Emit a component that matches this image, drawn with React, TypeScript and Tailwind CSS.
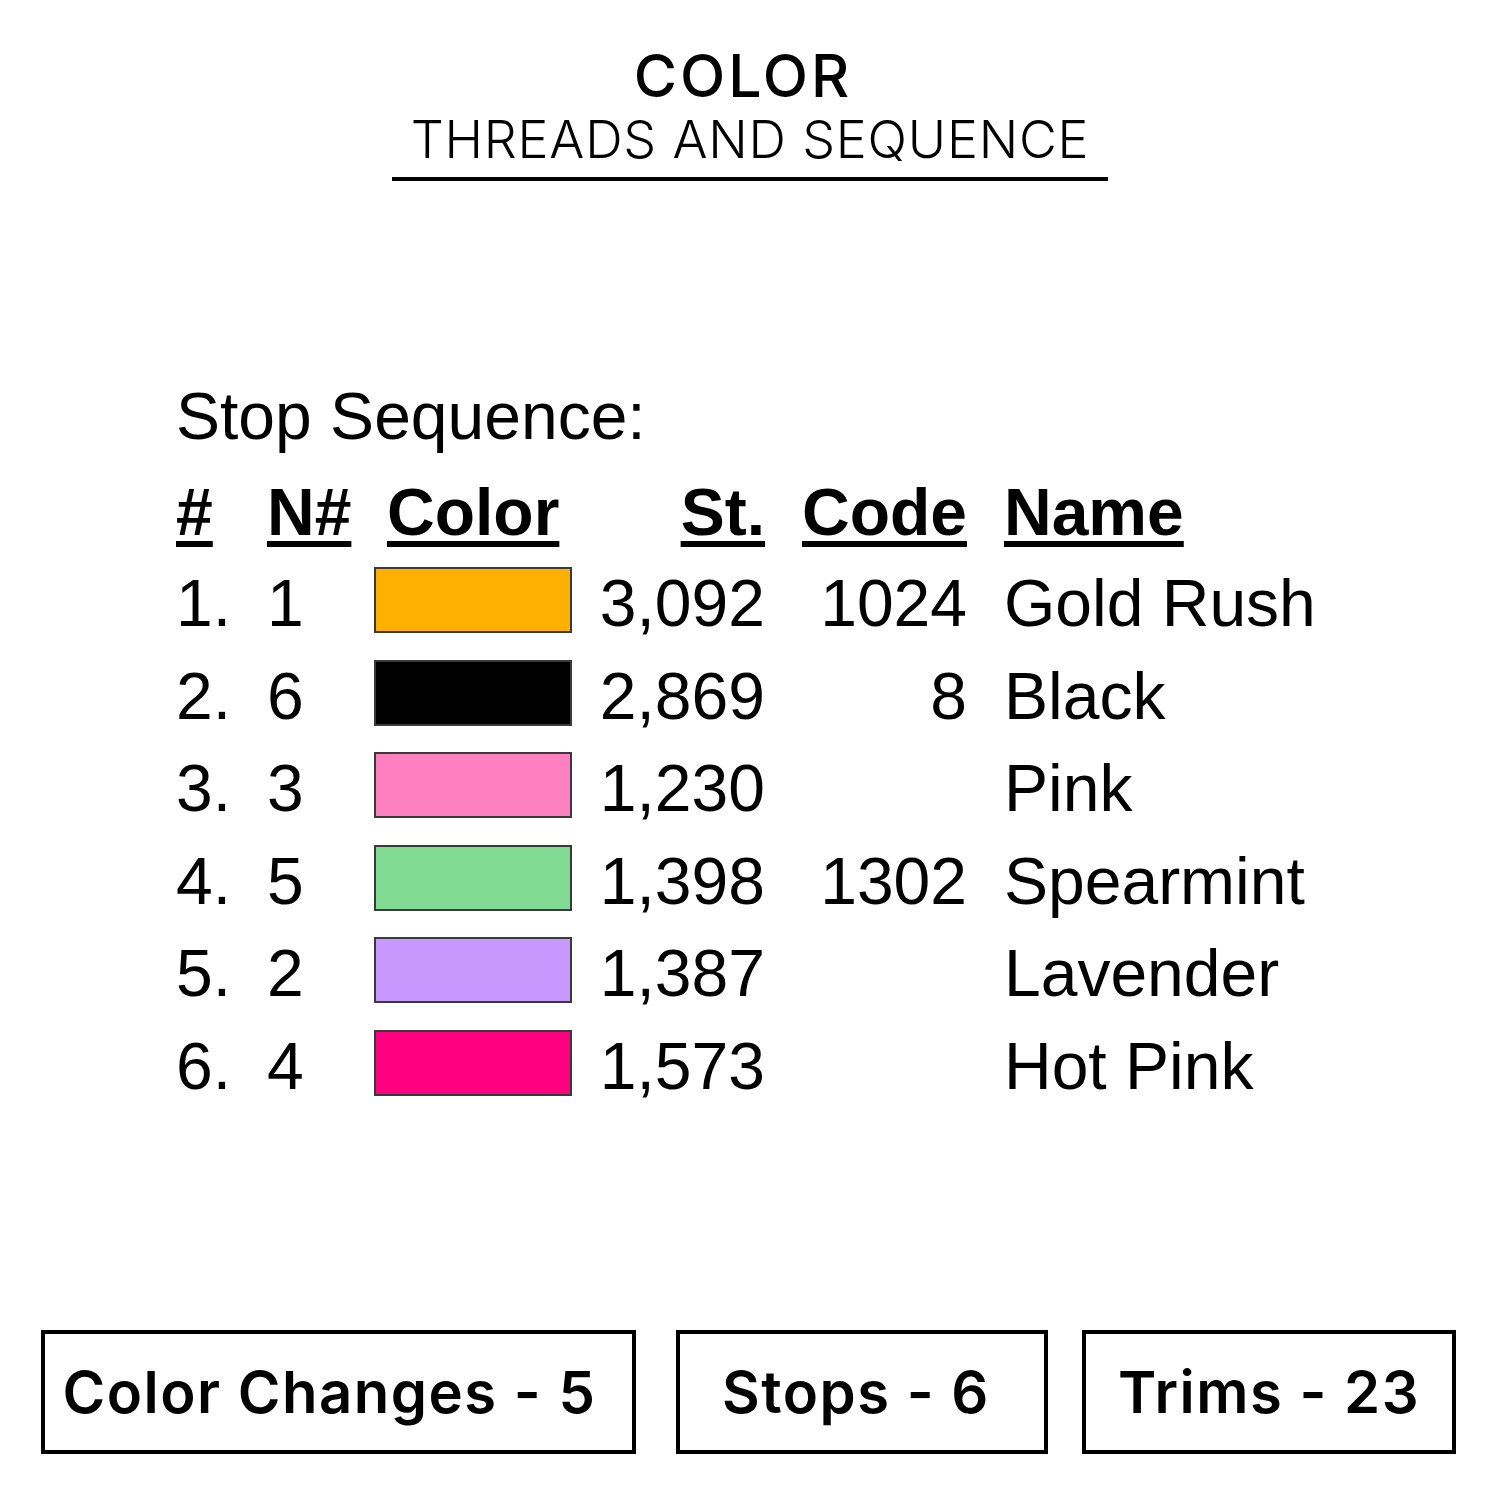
import React from "react";

type Row = {
  idx: string;
  needle: string;
  color: string;
  stitches: string;
  code: string;
  name: string;
};

const rows: Row[] = [
  { idx: "1.", needle: "1", color: "bg-[#ffb000]", stitches: "3,092", code: "1024", name: "Gold Rush" },
  { idx: "2.", needle: "6", color: "bg-[#000000]", stitches: "2,869", code: "8", name: "Black" },
  { idx: "3.", needle: "3", color: "bg-[#ff80c0]", stitches: "1,230", code: "", name: "Pink" },
  { idx: "4.", needle: "5", color: "bg-[#80da92]", stitches: "1,398", code: "1302", name: "Spearmint" },
  { idx: "5.", needle: "2", color: "bg-[#c898fe]", stitches: "1,387", code: "", name: "Lavender" },
  { idx: "6.", needle: "4", color: "bg-[#ff0080]", stitches: "1,573", code: "", name: "Hot Pink" },
];

const stats = [
  { label: "Color Changes - 5", cls: "w-[595px] pr-[18px]" },
  { label: "Stops - 6", cls: "w-[372px] pr-[12px]" },
  { label: "Trims - 23", cls: "w-[374px] -ml-[6px]" },
];

const headCls = "underline decoration-[6px] underline-offset-[6px]";

export default function App() {
  return (
    <div className="w-[1500px] h-[1500px] bg-white text-black flex flex-col">
      {/* titulo */}
      <div className="flex flex-col items-center pt-[41px] font-['Inter',sans-serif]">
        <h1 className="text-[59px] leading-[70px] font-medium tracking-[3px] pr-[14px]">COLOR</h1>
        <h2 className="text-[52px] leading-[60px] font-light tracking-[0.8px] -mt-[1px]">THREADS AND SEQUENCE</h2>
        <div className="w-[716px] h-[4px] bg-black mt-[7px]" />
      </div>

      {/* tabla de hilos */}
      <div className="pl-[176px] mt-[189px] font-['Liberation_Sans',Arial,sans-serif] text-[66px]">
        <div className="leading-[92px] mb-[6px]">Stop Sequence:</div>

        <div className="flex font-bold leading-[89px]">
          <div className="w-[91px]"><span className={headCls}>#</span></div>
          <div className="w-[107px]"><span className={headCls}>N#</span></div>
          <div className="w-[198px] pl-[13px]"><span className={headCls}>Color</span></div>
          <div className="w-[193px] text-right"><span className={headCls}>St.</span></div>
          <div className="w-[202px] text-right"><span className={headCls}>Code</span></div>
          <div className="pl-[37px]"><span className={headCls}>Name</span></div>
        </div>

        {rows.map((r) => (
          <div key={r.idx} className="flex h-[92.5px] leading-[92.5px]">
            <div className="w-[91px]">{r.idx}</div>
            <div className="w-[107px]">{r.needle}</div>
            <div className="w-[198px] pt-[10px]">
              <div className={`h-[66px] w-full border-2 border-[#3a3a3a] ${r.color}`} />
            </div>
            <div className="w-[193px] text-right">{r.stitches}</div>
            <div className="w-[202px] text-right">{r.code}</div>
            <div className="pl-[37px] whitespace-nowrap">{r.name}</div>
          </div>
        ))}
      </div>

      {/* resumen */}
      <div className="mt-auto mb-[46px] flex pl-[41px] gap-[40px] font-['Inter',sans-serif]">
        {stats.map((s) => (
          <div
            key={s.label}
            className={`${s.cls} h-[124px] border-[4px] border-black flex items-center justify-center`}
          >
            <span className="text-[58px] font-semibold tracking-[1.5px]">{s.label}</span>
          </div>
        ))}
      </div>
    </div>
  );
}
